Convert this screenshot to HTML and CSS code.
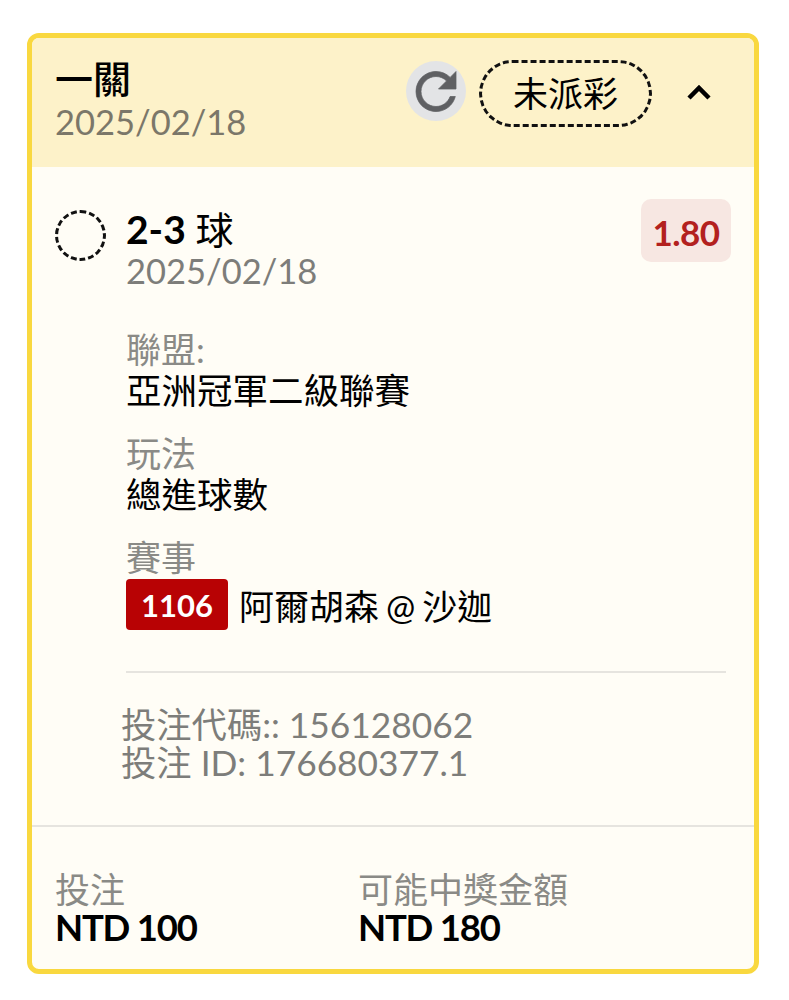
FILE: index.html

```html
<!DOCTYPE html>
<html lang="zh-Hant">
<head>
  <meta charset="UTF-8" />
  <meta name="viewport" content="width=device-width, initial-scale=1.0">
  <title>一關</title>
  <link rel="stylesheet" href="styles.css">
</head>
<body>
  <div class="bet-card">
    <div class="bet-header">
      <div class="bet-title">
        <div class="title">一關</div>
        <div class="date">2025/02/18</div>
      </div>
      <div class="header-actions">
        <span class="refresh">
          <svg width="61" height="61" viewBox="0 0 24 24">
            <path d="M17.65 6.35C16.2 4.9 14.21 4 12 4c-4.42 0-7.99 3.58-7.99 8s3.57 8 7.99 8c3.73 0 6.84-2.55 7.73-6h-2.08c-.82 2.33-3.04 4-5.65 4-3.31 0-6-2.69-6-6s2.69-6 6-6c1.66 0 3.14.69 4.22 1.78L13 11h7V4l-2.35 2.35z" fill="#5f6063" stroke="#5f6063" stroke-width="0.3"/>
          </svg>
        </span>
        <span class="status">未派彩</span>
        <svg class="chevron" width="26" height="18" viewBox="0 0 26 18">
          <path d="M3 15l10 -10l10 10" fill="none" stroke="#000" stroke-width="4.5"/>
        </svg>
      </div>
    </div>

    <div class="bet-body">
      <div class="selection">
        <span class="dot"></span>
        <div class="selection-text">
          <div class="pick"><b>2-3</b> 球</div>
          <div class="date">2025/02/18</div>
        </div>
        <span class="odds">1.80</span>
      </div>

      <div class="details">
        <div class="field">
          <div class="label">聯盟:</div>
          <div class="value">亞洲冠軍二級聯賽</div>
        </div>
        <div class="field">
          <div class="label">玩法</div>
          <div class="value">總進球數</div>
        </div>
        <div class="field">
          <div class="label">賽事</div>
          <div class="match">
            <span class="match-no">1106</span>
            <span class="match-name">阿爾胡森 @ 沙迦</span>
          </div>
        </div>
      </div>

      <div class="codes">
        <div>投注代碼:: 156128062</div>
        <div>投注 ID: 176680377.1</div>
      </div>
    </div>

    <div class="bet-footer">
      <div class="amount">
        <div class="label">投注</div>
        <div class="money">NTD 100</div>
      </div>
      <div class="amount">
        <div class="label">可能中獎金額</div>
        <div class="money">NTD 180</div>
      </div>
    </div>
  </div>
</body>
</html>
```

FILE: styles.css

```css
body {
  margin: 0;
  background: #fff;
  font-family: Lato, "Noto Sans CJK TC", sans-serif;
  color: #000;
}
.bet-card {
  box-sizing: border-box;
  width: 732px;
  height: 941px;
  margin: 33px 0 0 27px;
  background: #fffdf6;
  border: 5px solid #f9d83f;
  border-radius: 12px;
  overflow: hidden;
}
.bet-header {
  display: flex;
  justify-content: space-between;
  height: 129px;
  padding: 0 42px 0 23px;
  background: #fdf2c9;
}
.bet-title {
  padding-top: 16px;
}
.title {
  font-size: 38px;
  font-weight: 500;
  line-height: 48px;
}
.date {
  font-size: 34.5px;
  line-height: 39px;
  color: #7b7769;
}
.bet-body .date {
  color: #7d7d7a;
}
.header-actions {
  display: flex;
  align-items: center;
  height: 106px;
}
.refresh {
  display: flex;
  align-items: center;
  justify-content: center;
  width: 60px;
  height: 60px;
  border-radius: 50%;
  background: #e3e4e6;
}
.status {
  box-sizing: border-box;
  width: 173px;
  height: 67px;
  margin: 4px 0 0 13px;
  border: 3px dashed #111;
  border-radius: 34px;
  font-size: 35px;
  line-height: 61px;
  text-align: center;
}
.chevron {
  margin: 2px 0 0 34px;
}
.bet-body {
  height: 660px;
  padding: 32px 23px 0 23px;
  box-sizing: border-box;
  border-bottom: 2px solid #e6e4df;
}
.selection {
  display: flex;
  align-items: flex-start;
}
.dot {
  box-sizing: border-box;
  width: 51px;
  height: 51px;
  margin-top: 11px;
  border: 3px dashed #111;
  border-radius: 50%;
}
.selection-text {
  flex: 1;
  margin-left: 20px;
}
.pick {
  font-size: 38px;
  line-height: 44px;
  margin-top: 8px;
}
.pick b {
  font-size: 39px;
}
.odds {
  width: 90px;
  height: 63px;
  background: #f7e7e2;
  border-radius: 10px;
  color: #b3211e;
  font-size: 35px;
  font-weight: 700;
  letter-spacing: -0.5px;
  line-height: 66px;
  text-align: center;
}
.details {
  display: flex;
  flex-direction: column;
  gap: 21px;
  margin: 38px 5px 0 71px;
  padding-bottom: 41px;
  border-bottom: 2px solid #e6e4df;
}
.label {
  font-size: 35px;
  line-height: 42px;
  color: #8a8a86;
}
.value {
  font-size: 35.5px;
  line-height: 41px;
}
.match {
  display: flex;
  align-items: center;
  gap: 11px;
  margin-top: 1px;
}
.match-no {
  width: 102px;
  height: 51px;
  background: #b80204;
  border-radius: 4px;
  color: #fff;
  font-size: 31px;
  font-weight: 700;
  line-height: 52px;
  text-align: center;
}
.match-name {
  font-size: 35px;
  word-spacing: -2px;
}
.codes {
  margin: 33px 0 0 66px;
  font-size: 35.3px;
  line-height: 38px;
  color: #7d7d7a;
}
.bet-footer {
  display: flex;
  padding: 44px 23px 0;
}
.bet-footer .label {
  line-height: 36px;
}
.amount {
  width: 303px;
}
.money {
  margin-top: 1px;
  font-size: 36.5px;
  font-weight: 700;
  line-height: 38px;
  letter-spacing: -1.2px;
}
```
